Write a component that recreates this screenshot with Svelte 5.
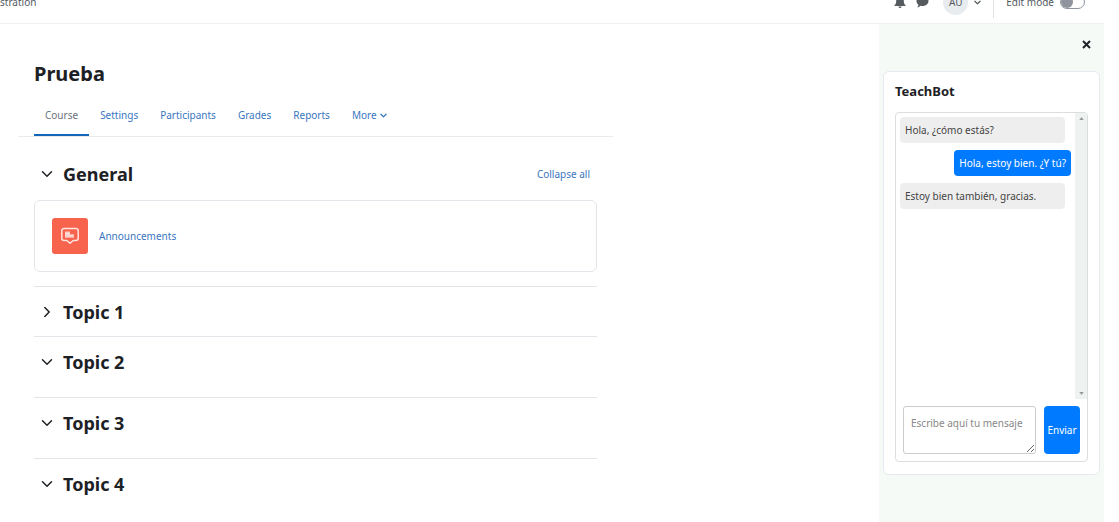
<script>
    const tabs = ['Course', 'Settings', 'Participants', 'Grades', 'Reports']

    let activeTab = $state('Course')
    let editMode = $state(false)
    let drawerOpen = $state(true)
    let draft = $state('')

    let sections = $state([
        { title: 'General', open: true, activity: 'Announcements' },
        { title: 'Topic 1', open: false },
        { title: 'Topic 2', open: true },
        { title: 'Topic 3', open: true },
        { title: 'Topic 4', open: true }
    ])

    let messages = $state([
        { from: 'bot', text: 'Hola, ¿cómo estás?' },
        { from: 'user', text: 'Hola, estoy bien. ¿Y tú?' },
        { from: 'bot', text: 'Estoy bien también, gracias.' }
    ])

    function collapseAll() {
        for (const section of sections) section.open = false
    }

    function send(e) {
        e.preventDefault()
        if (!draft.trim()) return
        messages.push({ from: 'user', text: draft.trim() })
        draft = ''
    }
</script>

{#snippet chevron(size, weight)}
    <svg width={size} height={size} viewBox="0 0 12 12" fill="none" aria-hidden="true">
        <path
            d="M1.5 3.8L6 8.2l4.5-4.4"
            stroke="currentColor"
            stroke-width={weight}
            stroke-linecap="round"
            stroke-linejoin="round"
        />
    </svg>
{/snippet}

<div class="page">
    <header class="navbar">
        <a class="nav-item" href="#admin">stration</a>
        <div class="nav-tools">
            <button class="icon-button" aria-label="Notifications">
                <svg width="12" height="12" viewBox="0 0 12 12" fill="currentColor">
                    <path d="M6 0a1 1 0 0 0-1 1C3 1.5 2.2 3 2.2 5c0 2.5-.7 3.300-1.700 4.300V10h11v-.7c-1-1-1.700-1.800-1.700-4.300 0-2-.8-3.500-2.800-4a1 1 0 0 0-1-1zM4.500 10.500a1.500 1.500 0 0 0 3 0z" />
                </svg>
            </button>
            <button class="icon-button" aria-label="Messages">
                <svg width="13" height="12" viewBox="0 0 13 12" fill="currentColor">
                    <path d="M6.500 0C3 0 .5 2.200.5 5c0 1.600.7 2.800 1.900 3.700 0 1-.5 1.900-1.400 2.600 1.600 0 2.800-.6 3.700-1.500.6.1 1.200.2 1.800.2 3.500 0 6-2.200 6-5s-2.500-5-6-5z" />
                </svg>
            </button>
            <button class="user-menu" aria-label="User menu">
                <span class="avatar">AU</span>
                {@render chevron(7, 2)}
            </button>
            <label class="edit-mode">
                Edit mode
                <input type="checkbox" role="switch" bind:checked={editMode} />
            </label>
        </div>
    </header>

    <div class="body">
        <main>
            <h1>Prueba</h1>
            <nav class="tabs">
                {#each tabs as tab}
                    <a
                        href="#{tab.toLowerCase()}"
                        class="tab"
                        class:active={activeTab === tab}
                        onclick={() => (activeTab = tab)}
                    >
                        {tab}
                    </a>
                {/each}
                <button class="tab more">More {@render chevron(7, 2)}</button>
            </nav>

            <div class="sections">
                {#each sections as section, i}
                    <section class:open={section.open}>
                        <div class="section-header">
                            <button
                                class="toggle"
                                class:collapsed={!section.open}
                                aria-label="Toggle {section.title}"
                                aria-expanded={section.open}
                                onclick={() => (section.open = !section.open)}
                            >
                                {@render chevron(12, 1.5)}
                            </button>
                            <h2>{section.title}</h2>
                            {#if i === 0}
                                <button class="collapse-all" onclick={collapseAll}>
                                    Collapse all
                                </button>
                            {/if}
                        </div>
                        {#if section.open && section.activity}
                            <div class="activity">
                                <span class="activity-icon">
                                    <svg width="20" height="18" viewBox="0 0 20 18" fill="none">
                                        <path
                                            d="M4 1.5h12A2.200 2.200 0 0 1 18.200 3.700v7.600a2.200 2.200 0 0 1-2.200 2.200h-2.800L10 16.300 6.800 13.500H4a2.200 2.200 0 0 1-2.200-2.200V3.700A2.200 2.200 0 0 1 4 1.500z"
                                            stroke="#ffe3de"
                                            stroke-width="1.5"
                                            stroke-linejoin="round"
                                        />
                                        <path d="M5 4.500h5v2.700h4v3.500H5z" fill="#fff" opacity="0.65" />
                                        <path d="M5 6.500h5M5 8.700h8" stroke="#fff" opacity="0.5" />
                                    </svg>
                                </span>
                                <a href="#announcements">{section.activity}</a>
                            </div>
                        {/if}
                    </section>
                {/each}
            </div>
        </main>

        {#if drawerOpen}
            <aside class="drawer">
                <button class="close" aria-label="Close" onclick={() => (drawerOpen = false)}>
                    <svg width="9" height="9" viewBox="0 0 9 9">
                        <path d="M1 1l7 7M8 1L1 8" stroke="currentColor" stroke-width="2" />
                    </svg>
                </button>
                <div class="block">
                    <h3>TeachBot</h3>
                    <div class="chat">
                        <div class="log">
                            <div class="messages">
                                {#each messages as message}
                                    <p class="message {message.from}">{message.text}</p>
                                {/each}
                            </div>
                            <div class="scroll-track" aria-hidden="true">
                                <svg width="5" height="3" viewBox="0 0 6 4"><path d="M0 4l3-4 3 4z" /></svg>
                                <svg width="5" height="3" viewBox="0 0 6 4"><path d="M0 0l3 4 3-4z" /></svg>
                            </div>
                        </div>
                        <form class="composer" onsubmit={send}>
                            <textarea
                                aria-label="Mensaje"
                                placeholder="Escribe aquí tu mensaje"
                                bind:value={draft}
                            ></textarea>
                            <button class="send">Enviar</button>
                        </form>
                    </div>
                </div>
            </aside>
        {/if}
    </div>
</div>

<style>
    :global(body) {
        overflow: hidden;
        background: #fff;
    }

    .page {
        display: flex;
        flex-direction: column;
        height: 100vh;
        box-sizing: border-box;
        padding-right: 15px;
        font-family: 'Noto Sans', 'Open Sans', sans-serif;
        font-size: 10px;
        line-height: 16px;
        color: #1d2125;
    }

    button,
    textarea {
        font: inherit;
    }

    button {
        padding: 0;
        border: none;
        background: none;
        color: inherit;
        cursor: pointer;
    }

    a {
        color: #3a76c0;
        text-decoration: none;
    }

    svg {
        display: block;
    }

    /* the bar is scrolled halfway out at the top */
    .navbar {
        display: flex;
        align-items: center;
        justify-content: space-between;
        flex-shrink: 0;
        height: 42px;
        margin-top: -19px;
        border-bottom: 1px solid #eef0f2;
    }

    .nav-item {
        color: #555a5f;
    }

    .nav-tools {
        display: flex;
        align-items: center;
        align-self: stretch;
        color: #555a5f;
    }

    .icon-button {
        margin-right: 10px;
    }

    .user-menu {
        display: flex;
        align-items: center;
        gap: 6px;
        margin: 0 12px 0 4px;
    }

    .avatar {
        width: 25px;
        height: 25px;
        border-radius: 50%;
        background: #e9ecef;
        line-height: 25px;
        text-align: center;
    }

    .edit-mode {
        display: flex;
        align-items: center;
        gap: 6px;
        height: 32px;
        padding: 0 19px 0 12px;
        border-left: 1px solid #dee2e6;
    }

    .edit-mode input {
        appearance: none;
        display: flex;
        box-sizing: border-box;
        width: 25px;
        height: 14px;
        margin: 0;
        border: 1px solid #8f959e;
        border-radius: 7px;
        background: #fff;
    }

    .edit-mode input::before {
        content: '';
        width: 12px;
        height: 12px;
        border-radius: 50%;
        background: #8f959e;
    }

    .edit-mode input:checked {
        justify-content: flex-end;
    }

    .body {
        display: flex;
        justify-content: space-between;
        flex: 1;
        min-height: 0;
    }

    main {
        flex: 0 1 595px;
        margin-left: 18px;
        padding-top: 37px;
    }

    h1,
    h2,
    h3,
    p {
        margin: 0;
    }

    h1 {
        padding: 0 16px;
        font-size: 20px;
        line-height: 26px;
    }

    .tabs {
        display: flex;
        padding: 7px 16px 0;
        border-bottom: 1px solid #e9ecef;
    }

    .tab {
        padding: 13px 11px 11px;
        border-bottom: 2px solid transparent;
        color: #3a76c0;
    }

    .tab.active {
        border-color: #1466b8;
        color: #6a737b;
    }

    .more {
        display: flex;
        align-items: center;
        gap: 3px;
    }

    .sections {
        padding: 12px 16px 0;
    }

    section.open {
        padding-bottom: 11px;
    }

    section:first-child {
        padding-bottom: 14px;
    }

    section + section {
        border-top: 1px solid #e2e6ea;
    }

    .section-header {
        display: flex;
        align-items: center;
        height: 49px;
    }

    .toggle {
        margin: 0 10px 0 7px;
    }

    .toggle.collapsed svg {
        transform: rotate(-90deg);
    }

    h2 {
        font-size: 18px;
        line-height: 24px;
    }

    .collapse-all {
        margin-left: auto;
        padding-right: 7px;
        color: #3a76c0;
    }

    .activity {
        display: flex;
        align-items: center;
        gap: 11px;
        padding: 17px;
        margin-top: 2px;
        border: 1px solid #e2e6ea;
        border-radius: 6px;
    }

    .activity-icon {
        display: grid;
        place-items: center;
        width: 36px;
        height: 36px;
        border-radius: 3px;
        background: #f7634d;
    }

    .drawer {
        box-sizing: border-box;
        width: 225px;
        padding: 14px 4px 0;
        background: #f5faf7;
    }

    .close {
        display: block;
        padding: 2px;
        margin: 0 7px 0 auto;
    }

    .block {
        padding: 10px 11px 12px;
        margin-top: 20px;
        border: 1px solid #e6eaee;
        border-radius: 6px;
        background: #fff;
    }

    h3 {
        margin-bottom: 12px;
        font-size: 13px;
        line-height: 18px;
    }

    .chat {
        border: 1px solid #ddd;
        border-radius: 4px;
    }

    .log {
        display: flex;
        height: 286px;
    }

    .messages {
        display: flex;
        flex-direction: column;
        gap: 7px;
        flex: 1;
        padding: 4px;
    }

    .message {
        padding: 5px;
        border-radius: 4px;
        white-space: nowrap;
    }

    .bot {
        margin-right: 6px;
        background: #eee;
        color: #444;
    }

    .user {
        align-self: flex-end;
        background: #007bff;
        color: #fff;
    }

    .scroll-track {
        display: flex;
        flex-direction: column;
        align-items: center;
        justify-content: space-between;
        box-sizing: border-box;
        width: 12px;
        padding: 4px 0;
        background: #eef2f0;
        fill: #999;
    }

    .composer {
        display: flex;
        gap: 8px;
        padding: 7px;
    }

    textarea {
        box-sizing: border-box;
        flex: 1;
        min-width: 0;
        height: 48px;
        padding: 8px 7px;
        border: 1px solid #ccc;
        border-radius: 3px;
    }

    textarea::placeholder {
        color: #888;
    }

    .send {
        width: 36px;
        border-radius: 4px;
        background: #007bff;
        color: #fff;
    }
</style>
